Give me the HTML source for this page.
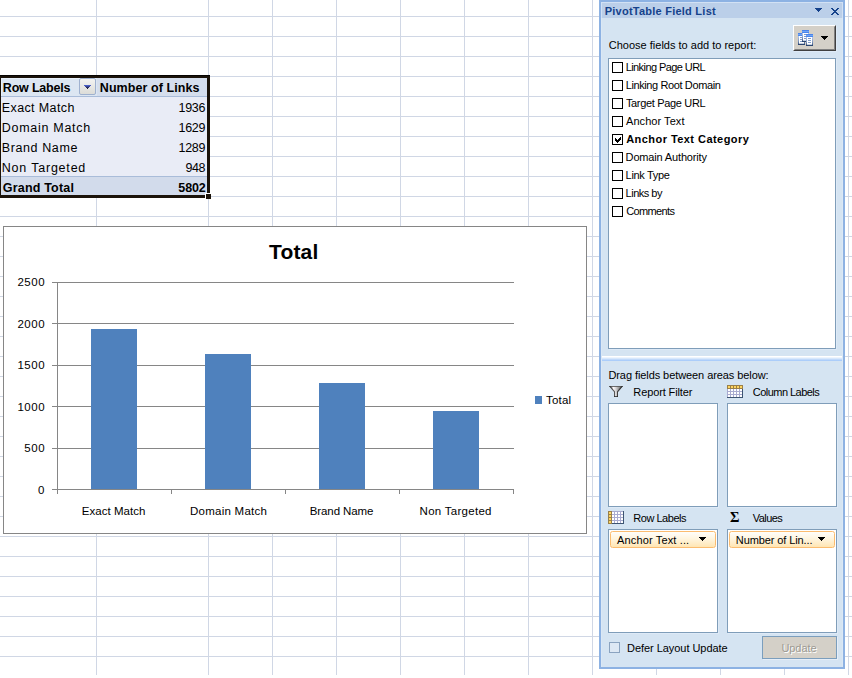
<!DOCTYPE html>
<html lang="en">
<head>
<meta charset="utf-8">
<title>PivotTable Field List</title>
<style>
html,body{margin:0;padding:0;background:#fff;}
body{width:852px;height:678px;position:relative;overflow:hidden;font-family:"Liberation Sans",sans-serif;}
div,span,svg{position:absolute;box-sizing:border-box;}
.t{white-space:nowrap;line-height:16px;}
#gh{left:0;top:0;width:852px;height:675px;background:linear-gradient(to bottom,#d0d7e5 1px,transparent 1px) 0 16px/100% 20px repeat;}
#gvA{left:96px;top:0;width:1px;height:675px;background:#d0d7e5;}
#gv{left:208px;top:0;width:644px;height:675px;background:linear-gradient(to right,#d0d7e5 1px,transparent 1px) 0 0/64px 100% repeat-x;}
/* pivot table */
#pt{left:-2px;top:75px;width:212px;height:123px;border:3px solid #1b130a;background:#e9ecf6;}
#pt .hd{left:0;top:0;width:206px;height:18px;background:linear-gradient(to right,#dce6f2 96px,#d5deed 96px);}
#pt .l1{left:0;top:18px;width:206px;height:1px;background:#a9bcd9;}
#pt .l2{left:0;top:98px;width:206px;height:1px;background:#a9bcd9;}
#pt .tot{left:0;top:99px;width:206px;height:18px;background:#d2dbeb;}
#fh{left:205px;top:193px;width:6px;height:6px;background:#1b130a;border:1px solid #fff;border-right:0;border-bottom:0;}
#dd{left:79px;top:78px;width:17px;height:17px;border:1px solid #9fb1cf;border-radius:2px;background:linear-gradient(#f3f3f1,#e8e8e5 50%,#dcdcd8);}
/* chart */
#chart{left:3px;top:226px;width:584px;height:308px;border:1px solid #868686;background:#fff;}
#csvg{left:0;top:0;width:852px;height:678px;}
/* panel */
#pn{left:599px;top:0;width:246px;height:669px;background:#d5e4f2;border:2px solid #8db2e3;border-top-width:2px;}
#ttl{left:601px;top:2px;width:242px;height:16px;background:#bbcfe9;border:1px solid #d2e1f4;border-bottom:0;}
#hl1{left:601px;top:18px;width:1px;height:649px;background:#dbe8f5;}
#hl2{left:842px;top:18px;width:1px;height:649px;background:#dbe8f5;}
.lb{background:#fff;border:1px solid #7f9db9;box-shadow:1px 1px 0 #deeaf7;}
#list{left:608px;top:58px;width:228px;height:291px;}
.cb{width:11px;height:11px;border:1px solid #000;background:#fff;left:612px;}
#a1{left:608px;top:403px;width:110px;height:104px;}
#a2{left:727px;top:403px;width:110px;height:104px;}
#a3{left:608px;top:529px;width:110px;height:104px;}
#a4{left:727px;top:529px;width:110px;height:104px;}
.chip{height:17px;width:106px;top:531px;border:1px solid #fbbc70;border-radius:2.5px;background:linear-gradient(#fffefb,#fff5df 45%,#ffeac0 85%,#ffe5b2);}
#sep1{left:602px;top:356px;width:240px;height:5px;background:linear-gradient(#fff 0,#fff 20%,#eef5fe 20%,#eef5fe 40%,#d8e8fc 40%,#d8e8fc 60%,#c0d9fb 60%,#c0d9fb 80%,#abcdfa 80%);}
#btn{left:793px;top:25px;width:43px;height:26px;background:#d4d0c8;border:1px solid;border-color:#fff #404040 #404040 #fff;box-shadow:1px 1px 0 #deeaf7;}
#btn:after{content:"";position:absolute;left:0;top:0;right:0;bottom:0;border:1px solid;border-color:#d4d0c8 #808080 #808080 #d4d0c8;}
#upd{left:762px;top:636px;width:75px;height:23px;background:#d4d0c8;border:1px solid #7b9ebd;box-shadow:1px 1px 0 #e6eef8;}
#dcb{left:609px;top:642px;width:11px;height:11px;border:1px solid #8aa3c0;background:#dde8f4;}
</style>
</head>
<body>
<div id="gh"></div><div id="gvA"></div><div id="gv"></div>

<div id="pt"><div class="hd"></div><div style="left:0;top:0;width:95px;height:1px;background:#e8f1fb"></div><div style="left:0;top:0;width:1px;height:18px;background:#e8f1fb"></div><div class="l1"></div><div class="l2"></div><div class="tot"></div></div>
<div style="left:0;top:75px;width:210px;height:1px;background:#050301"></div><div id="fh"></div>
<div id="dd"></div><svg style="left:84px;top:85px" width="7" height="4" viewBox="0 0 7 4" shape-rendering="crispEdges"><rect x="0" y="0" width="7" height="1" fill="#4b5fc4"/><rect x="1" y="1" width="5" height="1" fill="#3a4796"/><rect x="2" y="2" width="3" height="1" fill="#2a2f63"/><rect x="3" y="3" width="1" height="1" fill="#1c1c3c"/></svg>

<div id="chart"></div>
<svg id="csvg" width="852" height="678" viewBox="0 0 852 678" shape-rendering="crispEdges">
<g fill="#868686">
<rect x="52" y="282" width="462" height="1"/>
<rect x="52" y="323" width="462" height="1"/>
<rect x="52" y="365" width="462" height="1"/>
<rect x="52" y="406" width="462" height="1"/>
<rect x="52" y="448" width="462" height="1"/>
<rect x="52" y="489" width="462" height="1"/>
<rect x="57" y="282" width="1" height="212"/>
<rect x="171" y="489" width="1" height="5"/>
<rect x="285" y="489" width="1" height="5"/>
<rect x="399" y="489" width="1" height="5"/>
<rect x="513" y="489" width="1" height="5"/>
</g>
<g fill="#4f81bd">
<rect x="91" y="329" width="46" height="160"/>
<rect x="205" y="354" width="46" height="135"/>
<rect x="319" y="383" width="46" height="106"/>
<rect x="433" y="411" width="46" height="78"/>
<rect x="535" y="396" width="7" height="8"/>
</g>
</svg>

<div id="pn"></div>
<div id="ttl"></div><div id="hl1"></div><div id="hl2"></div>
<svg style="left:815px;top:8px" width="7" height="4" viewBox="0 0 7 4" shape-rendering="crispEdges"><path d="M0 0h7v1h-1v1h-1v1h-1v1h-1v-1h-1v-1h-1v-1h-1z" fill="#15428b"/></svg>
<svg style="left:831px;top:8px" width="8" height="7" viewBox="0 0 8 7" shape-rendering="crispEdges"><path d="M0 0h2v1h1v1h2v-1h1v-1h2v1h-1v1h-1v1h-1v1h1v1h1v1h1v1h-2v-1h-1v-1h-2v1h-1v1h-2v-1h1v-1h1v-1h1v-1h-1v-1h-1v-1h-1z" fill="#15428b"/></svg>
<div id="btn"></div>
<svg style="left:821px;top:36px" width="7" height="4" viewBox="0 0 7 4" shape-rendering="crispEdges"><path d="M0 0h7v1h-1v1h-1v1h-1v1h-1v-1h-1v-1h-1v-1h-1z" fill="#000"/></svg>
<div id="list" class="lb"></div>
<div class="cb" style="top:62px"></div>
<div class="cb" style="top:80px"></div>
<div class="cb" style="top:98px"></div>
<div class="cb" style="top:116px"></div>
<div class="cb" style="top:134px"></div>
<div class="cb" style="top:152px"></div>
<div class="cb" style="top:170px"></div>
<div class="cb" style="top:188px"></div>
<div class="cb" style="top:206px"></div>
<svg style="left:615px;top:137px" width="6" height="6" viewBox="0 0 6 6" shape-rendering="crispEdges"><path d="M0 1h1v1h1v1h1v-1h1v-1h1v-1h1v3h-1v1h-1v1h-1v1h-1v-1h-1v-1h-1z" fill="#000"/></svg>
<div id="sep1"></div>
<div id="a1" class="lb"></div><div id="a2" class="lb"></div><div id="a3" class="lb"></div><div id="a4" class="lb"></div>
<div class="chip" style="left:610px"></div>
<div class="chip" style="left:729px"></div>
<svg style="left:699px;top:537px" width="7" height="4" viewBox="0 0 7 4" shape-rendering="crispEdges"><path d="M0 0h7v1h-1v1h-1v1h-1v1h-1v-1h-1v-1h-1v-1h-1z" fill="#000"/></svg>
<svg style="left:818px;top:537px" width="7" height="4" viewBox="0 0 7 4" shape-rendering="crispEdges"><path d="M0 0h7v1h-1v1h-1v1h-1v1h-1v-1h-1v-1h-1v-1h-1z" fill="#000"/></svg>
<div id="dcb"></div>
<div id="upd"></div>
<svg id="isvg" style="left:0;top:0" width="852" height="678" viewBox="0 0 852 678" shape-rendering="crispEdges">
<defs><linearGradient id="dg" x1="0" x2="0" y1="0" y2="1"><stop offset="0" stop-color="#b4c8ea"/><stop offset="0.55" stop-color="#8098c0"/><stop offset="1" stop-color="#2b456f"/></linearGradient><linearGradient id="fg" x1="0" x2="1" y1="0" y2="0"><stop offset="0" stop-color="#555"/><stop offset="0.32" stop-color="#fbf7f9"/><stop offset="0.5" stop-color="#d4d2d3"/><stop offset="0.8" stop-color="#7c7c7c"/><stop offset="1" stop-color="#3c3c3c"/></linearGradient></defs>
<g transform="translate(798,33)"><rect x="0" y="0" width="7" height="12" fill="#fff"/><rect x="0" y="0" width="7" height="1" fill="#4a84ea"/><rect x="0" y="1" width="7" height="1" fill="#6fa4f5"/><rect x="0" y="2" width="7" height="1" fill="#4a86ec"/><rect x="0" y="3" width="1" height="9" fill="url(#dg)"/><rect x="6" y="3" width="1" height="9" fill="url(#dg)"/><rect x="2" y="4" width="3" height="1" fill="#7f9ccb"/><rect x="2" y="6" width="3" height="1" fill="#7f9ccb"/><rect x="2" y="8" width="3" height="1" fill="#7f9ccb"/><rect x="1" y="10" width="5" height="1" fill="#c4d0e2"/><rect x="0" y="11" width="7" height="1" fill="#2b456f"/></g><g transform="translate(802,30)"><rect x="0" y="0" width="7" height="12" fill="#fff"/><rect x="0" y="0" width="7" height="1" fill="#4a84ea"/><rect x="0" y="1" width="7" height="1" fill="#6fa4f5"/><rect x="0" y="2" width="7" height="1" fill="#4a86ec"/><rect x="0" y="3" width="1" height="9" fill="url(#dg)"/><rect x="6" y="3" width="1" height="9" fill="url(#dg)"/><rect x="2" y="4" width="3" height="1" fill="#7f9ccb"/><rect x="2" y="6" width="3" height="1" fill="#7f9ccb"/><rect x="2" y="8" width="3" height="1" fill="#7f9ccb"/><rect x="1" y="10" width="5" height="1" fill="#c4d0e2"/><rect x="0" y="11" width="7" height="1" fill="#2b456f"/></g><g transform="translate(806,34)"><rect x="0" y="0" width="7" height="12" fill="#fff"/><rect x="0" y="0" width="7" height="1" fill="#4a84ea"/><rect x="0" y="1" width="7" height="1" fill="#6fa4f5"/><rect x="0" y="2" width="7" height="1" fill="#4a86ec"/><rect x="0" y="3" width="1" height="9" fill="url(#dg)"/><rect x="6" y="3" width="1" height="9" fill="url(#dg)"/><rect x="2" y="4" width="3" height="1" fill="#7f9ccb"/><rect x="2" y="6" width="3" height="1" fill="#7f9ccb"/><rect x="2" y="8" width="3" height="1" fill="#7f9ccb"/><rect x="1" y="10" width="5" height="1" fill="#c4d0e2"/><rect x="0" y="11" width="7" height="1" fill="#2b456f"/></g>
<g shape-rendering="geometricPrecision"><path d="M609 386h14l-5 6v5h-4v-5z" fill="url(#fg)"/><path d="M609 386h14l-0.8 1h-12.4z" fill="#555" opacity="0.85"/><path d="M609 386l5 6v5h1v-5.4l-4.6-5.6z" fill="#2e2e2e" opacity="0.8"/><path d="M623 386l-5 6v5h-1v-5.4l4.6-5.6z" fill="#2a2a2a" opacity="0.85"/><rect x="614" y="396" width="4" height="1" fill="#2a2a2a" opacity="0.8"/></g>
<g transform="translate(727,385)"><rect x="0" y="0" width="16" height="13" fill="#a9abd0"/><rect x="15" y="0" width="1" height="13" fill="#3d5472"/><rect x="0" y="12" width="16" height="1" fill="#3d5472"/><rect x="0" y="0" width="16" height="4" fill="#9a8048"/><rect x="1" y="1" width="2" height="2" fill="#ffd560"/><rect x="1" y="4" width="2" height="2" fill="#fff"/><rect x="1" y="7" width="2" height="2" fill="#fff"/><rect x="1" y="10" width="2" height="2" fill="#fff"/><rect x="4" y="1" width="2" height="2" fill="#ffd560"/><rect x="4" y="4" width="2" height="2" fill="#fff"/><rect x="4" y="7" width="2" height="2" fill="#fff"/><rect x="4" y="10" width="2" height="2" fill="#fff"/><rect x="7" y="1" width="2" height="2" fill="#ffd560"/><rect x="7" y="4" width="2" height="2" fill="#fff"/><rect x="7" y="7" width="2" height="2" fill="#fff"/><rect x="7" y="10" width="2" height="2" fill="#fff"/><rect x="10" y="1" width="2" height="2" fill="#ffd560"/><rect x="10" y="4" width="2" height="2" fill="#fff"/><rect x="10" y="7" width="2" height="2" fill="#fff"/><rect x="10" y="10" width="2" height="2" fill="#fff"/><rect x="13" y="1" width="2" height="2" fill="#ffd560"/><rect x="13" y="4" width="2" height="2" fill="#fff"/><rect x="13" y="7" width="2" height="2" fill="#fff"/><rect x="13" y="10" width="2" height="2" fill="#fff"/></g>
<g transform="translate(608,511)"><rect x="0" y="0" width="16" height="13" fill="#a9abd0"/><rect x="15" y="0" width="1" height="13" fill="#3d5472"/><rect x="0" y="12" width="16" height="1" fill="#3d5472"/><rect x="0" y="0" width="4" height="13" fill="#9a8048"/><rect x="1" y="1" width="2" height="2" fill="#ffd560"/><rect x="1" y="4" width="2" height="2" fill="#ffd560"/><rect x="1" y="7" width="2" height="2" fill="#ffd560"/><rect x="1" y="10" width="2" height="2" fill="#ffd560"/><rect x="4" y="1" width="2" height="2" fill="#fff"/><rect x="4" y="4" width="2" height="2" fill="#fff"/><rect x="4" y="7" width="2" height="2" fill="#fff"/><rect x="4" y="10" width="2" height="2" fill="#fff"/><rect x="7" y="1" width="2" height="2" fill="#fff"/><rect x="7" y="4" width="2" height="2" fill="#fff"/><rect x="7" y="7" width="2" height="2" fill="#fff"/><rect x="7" y="10" width="2" height="2" fill="#fff"/><rect x="10" y="1" width="2" height="2" fill="#fff"/><rect x="10" y="4" width="2" height="2" fill="#fff"/><rect x="10" y="7" width="2" height="2" fill="#fff"/><rect x="10" y="10" width="2" height="2" fill="#fff"/><rect x="13" y="1" width="2" height="2" fill="#fff"/><rect x="13" y="4" width="2" height="2" fill="#fff"/><rect x="13" y="7" width="2" height="2" fill="#fff"/><rect x="13" y="10" width="2" height="2" fill="#fff"/></g>
</svg>
<span class="t" style="left:2.80px;top:80px;font-size:12.5px;letter-spacing:-0.190px;color:#000;font-weight:700;">Row Labels</span>
<span class="t" style="left:99.80px;top:80px;font-size:12.5px;letter-spacing:0.074px;color:#000;font-weight:700;">Number of Links</span>
<span class="t" style="left:1.80px;top:100px;font-size:12.5px;letter-spacing:0.378px;color:#000;">Exact Match</span>
<span class="t" style="left:1.80px;top:120px;font-size:12.5px;letter-spacing:0.706px;color:#000;">Domain Match</span>
<span class="t" style="left:1.80px;top:140px;font-size:12.5px;letter-spacing:0.598px;color:#000;">Brand Name</span>
<span class="t" style="left:1.80px;top:160px;font-size:12.5px;letter-spacing:0.791px;color:#000;">Non Targeted</span>
<span class="t" style="left:2.80px;top:180px;font-size:12.5px;letter-spacing:0.186px;color:#000;font-weight:700;">Grand Total</span>
<span class="t" style="left:178.60px;top:100px;font-size:12.5px;letter-spacing:-0.319px;color:#000;">1936</span>
<span class="t" style="left:178.60px;top:120px;font-size:12.5px;letter-spacing:-0.319px;color:#000;">1629</span>
<span class="t" style="left:178.60px;top:140px;font-size:12.5px;letter-spacing:-0.319px;color:#000;">1289</span>
<span class="t" style="left:185.60px;top:160px;font-size:12.5px;letter-spacing:-0.502px;color:#000;">948</span>
<span class="t" style="left:178.30px;top:180px;font-size:12.5px;letter-spacing:-0.119px;color:#000;font-weight:700;">5802</span>
<span class="t" style="left:269.00px;top:244px;font-size:21px;letter-spacing:0.158px;color:#000;font-weight:700;">Total</span>
<span class="t" style="left:17.40px;top:274px;font-size:11.5px;letter-spacing:0.538px;color:#000;">2500</span>
<span class="t" style="left:17.40px;top:316px;font-size:11.5px;letter-spacing:0.538px;color:#000;">2000</span>
<span class="t" style="left:17.40px;top:357px;font-size:11.5px;letter-spacing:0.538px;color:#000;">1500</span>
<span class="t" style="left:17.40px;top:399px;font-size:11.5px;letter-spacing:0.538px;color:#000;">1000</span>
<span class="t" style="left:24.30px;top:440px;font-size:11.5px;letter-spacing:0.554px;color:#000;">500</span>
<span class="t" style="left:37.90px;top:482px;font-size:11.5px;letter-spacing:0.000px;color:#000;">0</span>
<span class="t" style="left:81.70px;top:503px;font-size:11.5px;letter-spacing:0.052px;color:#000;">Exact Match</span>
<span class="t" style="left:190.00px;top:503px;font-size:11.5px;letter-spacing:0.251px;color:#000;">Domain Match</span>
<span class="t" style="left:309.70px;top:503px;font-size:11.5px;letter-spacing:-0.085px;color:#000;">Brand Name</span>
<span class="t" style="left:419.60px;top:503px;font-size:11.5px;letter-spacing:0.277px;color:#000;">Non Targeted</span>
<span class="t" style="left:546.00px;top:392px;font-size:11.5px;letter-spacing:0.191px;color:#000;">Total</span>
<span class="t" style="left:604.70px;top:3px;font-size:11px;letter-spacing:0.241px;color:#15428b;font-weight:700;">PivotTable Field List</span>
<span class="t" style="left:608.80px;top:37px;font-size:11px;letter-spacing:0.003px;color:#000;">Choose fields to add to report:</span>
<span class="t" style="left:625.70px;top:59px;font-size:11px;letter-spacing:-0.583px;color:#000;">Linking Page URL</span>
<span class="t" style="left:625.70px;top:77px;font-size:11px;letter-spacing:-0.388px;color:#000;">Linking Root Domain</span>
<span class="t" style="left:625.90px;top:95px;font-size:11px;letter-spacing:-0.333px;color:#000;">Target Page URL</span>
<span class="t" style="left:626.00px;top:113px;font-size:11px;letter-spacing:0.057px;color:#000;">Anchor Text</span>
<span class="t" style="left:626.20px;top:131px;font-size:11px;letter-spacing:0.449px;color:#000;font-weight:700;">Anchor Text Category</span>
<span class="t" style="left:625.60px;top:149px;font-size:11px;letter-spacing:-0.158px;color:#000;">Domain Authority</span>
<span class="t" style="left:625.60px;top:167px;font-size:11px;letter-spacing:-0.321px;color:#000;">Link Type</span>
<span class="t" style="left:625.60px;top:185px;font-size:11px;letter-spacing:-0.508px;color:#000;">Links by</span>
<span class="t" style="left:626.20px;top:203px;font-size:11px;letter-spacing:-0.640px;color:#000;">Comments</span>
<span class="t" style="left:608.40px;top:367px;font-size:11px;letter-spacing:-0.077px;color:#000;">Drag fields between areas below:</span>
<span class="t" style="left:633.30px;top:384px;font-size:11px;letter-spacing:-0.113px;color:#000;">Report Filter</span>
<span class="t" style="left:752.80px;top:384px;font-size:11px;letter-spacing:-0.540px;color:#000;">Column Labels</span>
<span class="t" style="left:633.30px;top:510px;font-size:11px;letter-spacing:-0.475px;color:#000;">Row Labels</span>
<span class="t" style="left:752.80px;top:510px;font-size:11px;letter-spacing:-0.563px;color:#000;">Values</span>
<span class="t" style="left:617.00px;top:532px;font-size:11px;letter-spacing:0.146px;color:#000;">Anchor Text ...</span>
<span class="t" style="left:735.80px;top:532px;font-size:11px;letter-spacing:-0.100px;color:#000;">Number of Lin...</span>
<span class="t" style="left:627.00px;top:640px;font-size:11px;letter-spacing:-0.044px;color:#000;">Defer Layout Update</span>
<span class="t" style="left:782.40px;top:641px;font-size:11px;letter-spacing:-0.051px;color:#fff;">Update</span>
<span class="t" style="left:781.40px;top:640px;font-size:11px;letter-spacing:-0.051px;color:#9d9a93;">Update</span>
<span class="t" style="left:730.00px;top:509px;font-size:14.2px;letter-spacing:0.000px;color:#000;font-weight:700;font-family:'Liberation Serif',serif;transform:scale(1.02,0.96);transform-origin:0 12.5px;">Σ</span>
</body>
</html>
